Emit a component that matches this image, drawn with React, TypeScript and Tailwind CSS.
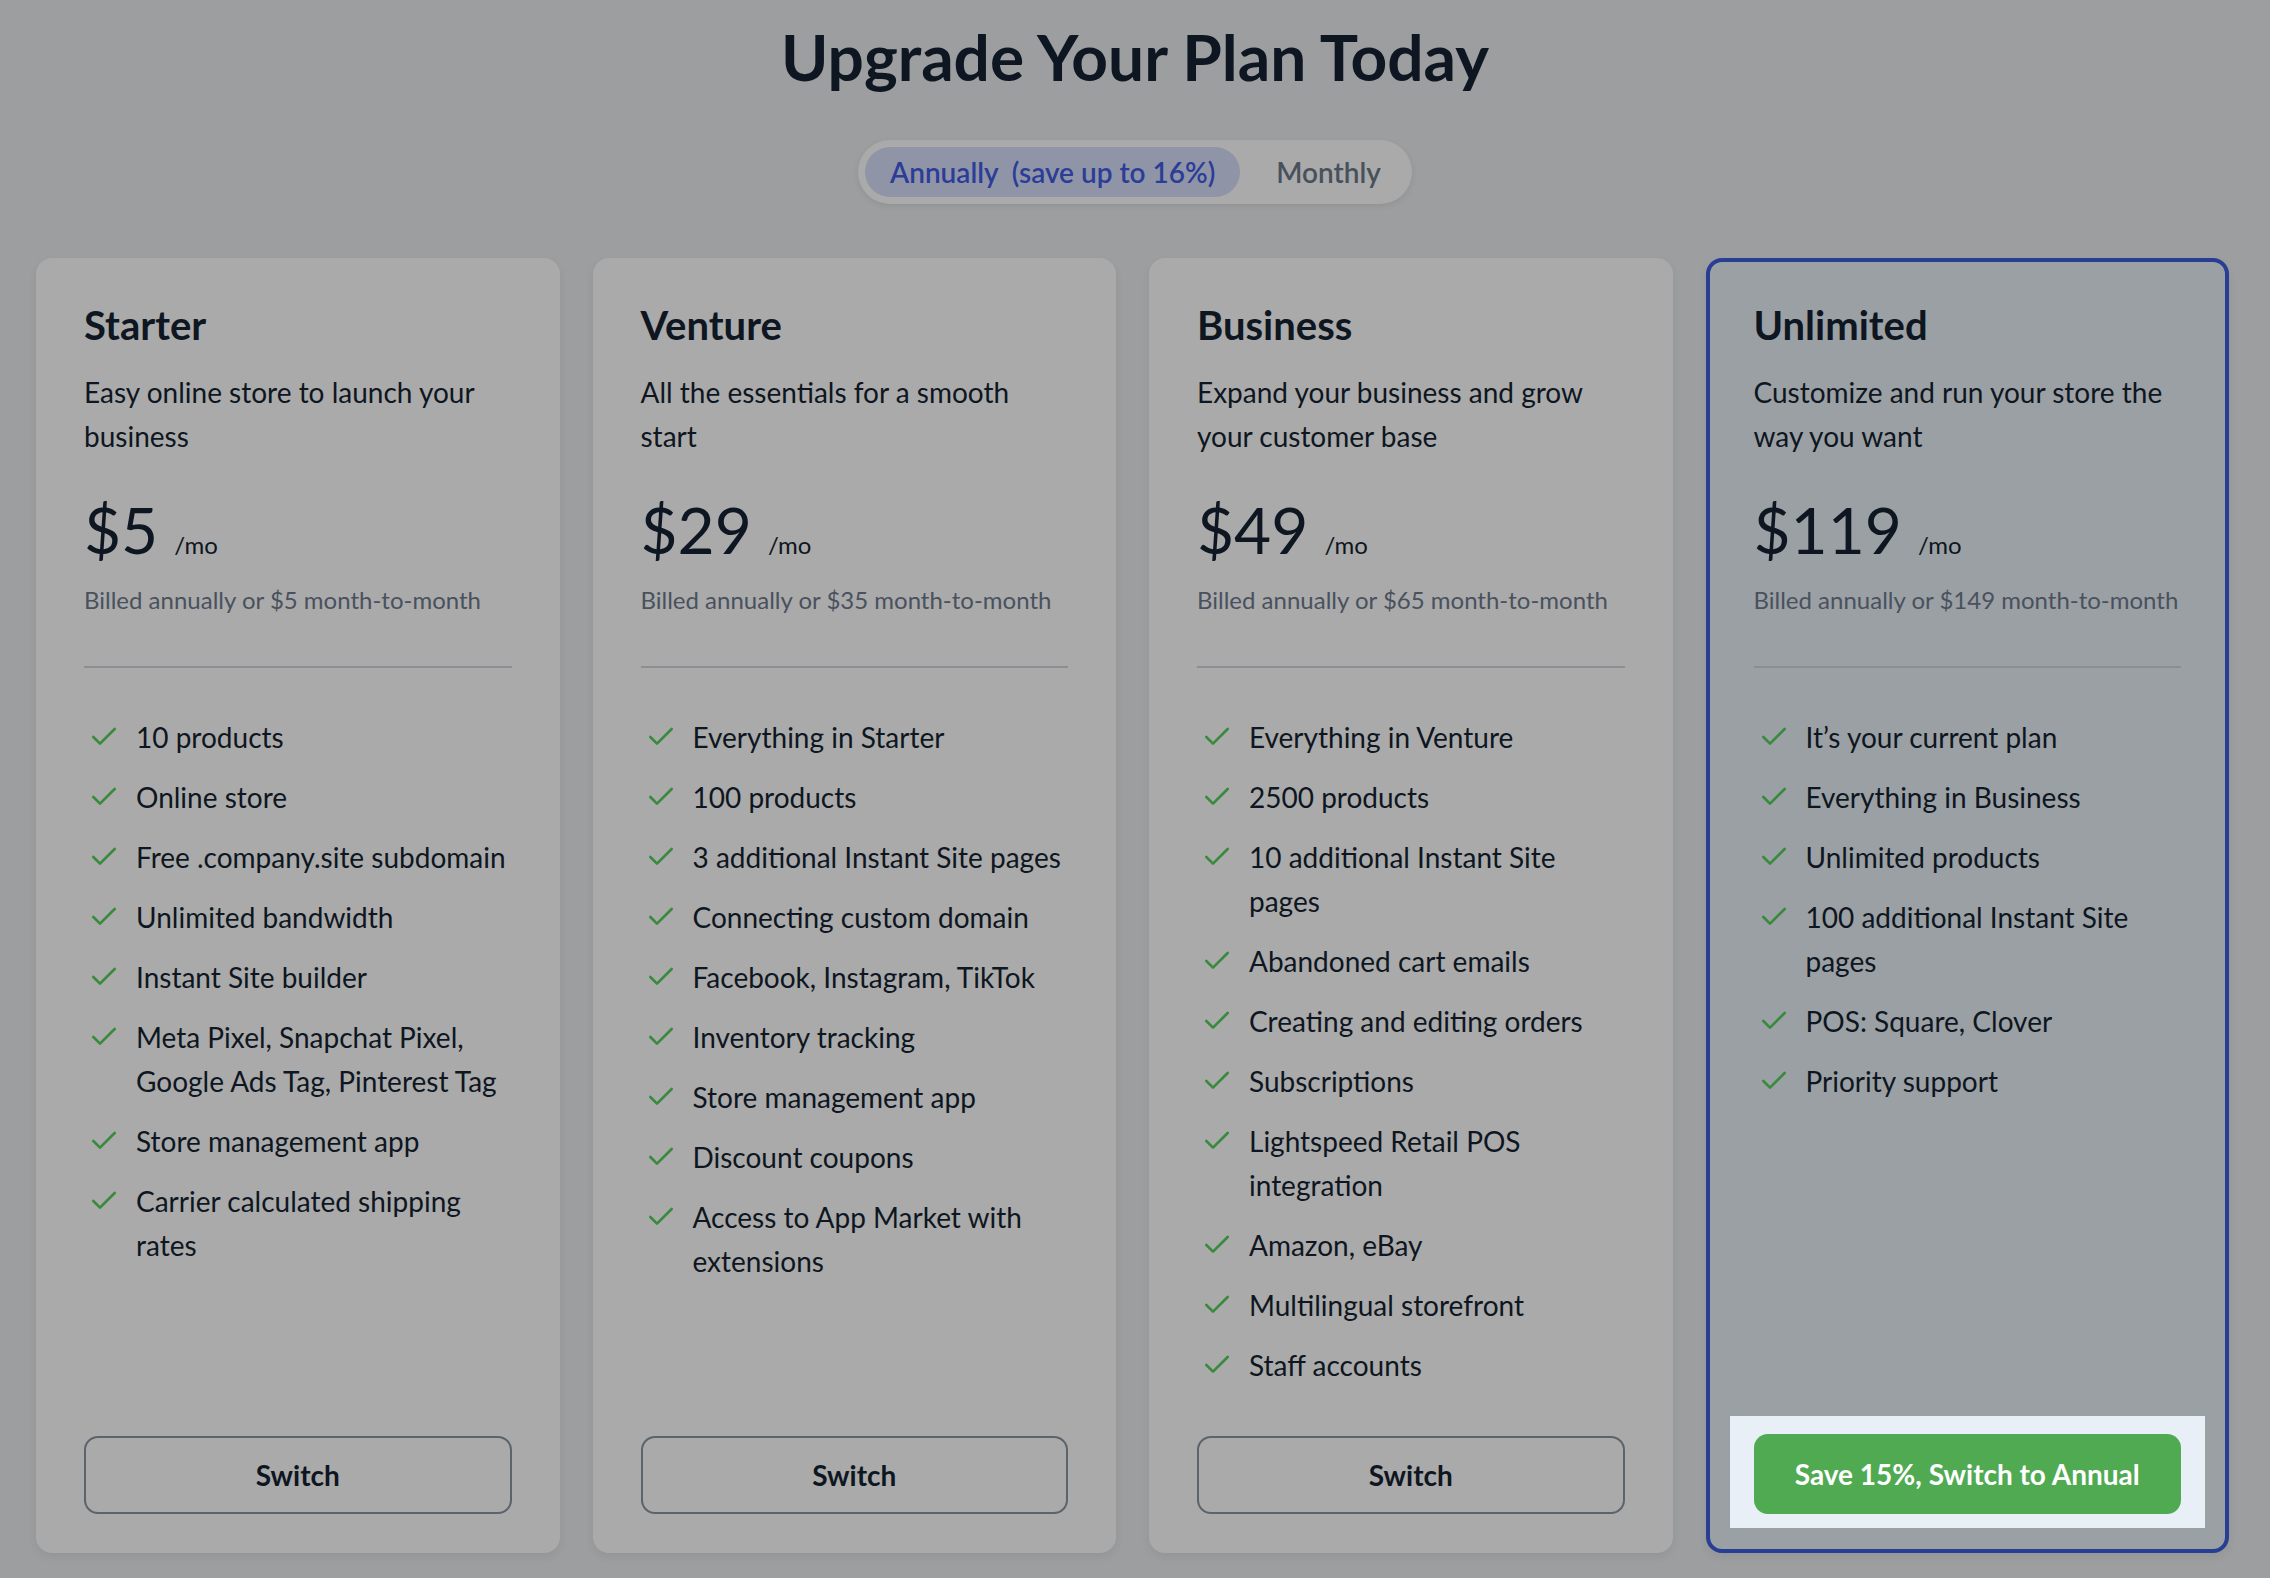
import React from "react";

type Plan = {
  name: string;
  desc: string;
  price: string;
  monthly: string;
  features: string[];
  current?: boolean;
};

const plans: Plan[] = [
  {
    name: "Starter",
    desc: "Easy online store to launch your business",
    price: "$5",
    monthly: "$5",
    features: [
      "10 products",
      "Online store",
      "Free .company.site subdomain",
      "Unlimited bandwidth",
      "Instant Site builder",
      "Meta Pixel, Snapchat Pixel, Google Ads Tag, Pinterest Tag",
      "Store management app",
      "Carrier calculated shipping rates",
    ],
  },
  {
    name: "Venture",
    desc: "All the essentials for a smooth start",
    price: "$29",
    monthly: "$35",
    features: [
      "Everything in Starter",
      "100 products",
      "3 additional Instant Site pages",
      "Connecting custom domain",
      "Facebook, Instagram, TikTok",
      "Inventory tracking",
      "Store management app",
      "Discount coupons",
      "Access to App Market with extensions",
    ],
  },
  {
    name: "Business",
    desc: "Expand your business and grow your customer base",
    price: "$49",
    monthly: "$65",
    features: [
      "Everything in Venture",
      "2500 products",
      "10 additional Instant Site pages",
      "Abandoned cart emails",
      "Creating and editing orders",
      "Subscriptions",
      "Lightspeed Retail POS integration",
      "Amazon, eBay",
      "Multilingual storefront",
      "Staff accounts",
    ],
  },
  {
    name: "Unlimited",
    desc: "Customize and run your store the way you want",
    price: "$119",
    monthly: "$149",
    current: true,
    features: [
      "It’s your current plan",
      "Everything in Business",
      "Unlimited products",
      "100 additional Instant Site pages",
      "POS: Square, Clover",
      "Priority support",
    ],
  },
];

const CheckIcon = () => (
  <svg
    viewBox="0 0 24 24"
    className="w-[32px] h-[32px] text-[#3a8a3e]"
    fill="none"
    stroke="currentColor"
    strokeWidth={2}
    strokeLinecap="round"
    strokeLinejoin="round"
  >
    <path d="M20 6 9 17l-5-5" />
  </svg>
);

const PlanCard: React.FC<{ plan: Plan }> = ({ plan }) => {
  const cardCls = plan.current
    ? "bg-[#9ba0a4] border-[4px] border-[#283d94] pt-[39px] px-[44px] pb-[35px]"
    : "bg-[#aaaaaa] pt-[43px] px-[48px] pb-[39px]";

  return (
    <div
      className={`flex flex-col rounded-[16px] shadow-[0_4px_10px_rgba(0,0,0,0.06)] ${cardCls}`}
    >
      <h2 className="text-[40px] leading-[48px] font-bold text-[#0e1621]">
        {plan.name}
      </h2>
      <p className="mt-[21px] text-[28px] leading-[44px] text-[#0e1621]">
        {plan.desc}
      </p>

      {/* Price */}
      <div className="mt-[40px] flex items-baseline gap-[16px] text-[#0e1621]">
        <span className="text-[64px] leading-[64px]">{plan.price}</span>
        <span className="text-[24px] leading-none">/mo</span>
      </div>
      <p className="mt-[20px] text-[24px] leading-[36px] text-[#49515e]">
        Billed annually or {plan.monthly} month-to-month
      </p>

      <div className="mt-[48px] h-[2px] bg-[#8b8e93]" />

      {/* Features */}
      <ul className="mt-[47px] flex flex-col gap-[16px]">
        {plan.features.map((f) => (
          <li key={f} className="flex items-start">
            <span className="w-[40px] h-[44px] flex items-center justify-center shrink-0">
              <CheckIcon />
            </span>
            <span className="ml-[12px] text-[28px] leading-[44px] text-[#0e1621]">
              {f}
            </span>
          </li>
        ))}
      </ul>

      <div className="mt-auto">
        {plan.current ? (
          <div className="-mx-[24px] -mt-[18px] -mb-[14px] px-[24px] pt-[18px] pb-[14px] bg-[#e8eff6]">
            <button className="w-full h-[80px] rounded-[14px] bg-[#4faa52] text-white text-[28px] font-bold">
              Save 15%, Switch to Annual
            </button>
          </div>
        ) : (
          <button className="w-full h-[78px] rounded-[14px] border-[2px] border-[#5b636d] text-[#0e1621] text-[28px] font-bold">
            Switch
          </button>
        )}
      </div>
    </div>
  );
};

export default function App() {
  return (
    <div className="min-h-screen bg-[#9d9ea0] font-[Lato,sans-serif] pb-[25px]">
      {/* Header */}
      <div className="pt-[18px] flex flex-col items-center">
        <h1 className="text-[64px] leading-[77px] font-bold text-[#0e1621]">
          Upgrade Your Plan Today
        </h1>
        <div className="mt-[45px] flex items-center h-[64px] p-[7px] rounded-full bg-[#aaaaab] shadow-[0_2px_6px_rgba(0,0,0,0.08)]">
          <button className="h-full px-[25px] rounded-full bg-[#8f95a6] text-[#2b3d98] text-[28px] font-semibold whitespace-pre">
            Annually  (save up to 16%)
          </button>
          <button className="h-full pl-[36px] pr-[24px] text-[#48515b] text-[28px] font-semibold">
            Monthly
          </button>
        </div>
      </div>

      {/* Plans */}
      <div className="mt-[54px] h-[1295px] pl-[36px] pr-[41px] grid grid-cols-4 gap-[33px]">
        {plans.map((p) => (
          <PlanCard key={p.name} plan={p} />
        ))}
      </div>
    </div>
  );
}
